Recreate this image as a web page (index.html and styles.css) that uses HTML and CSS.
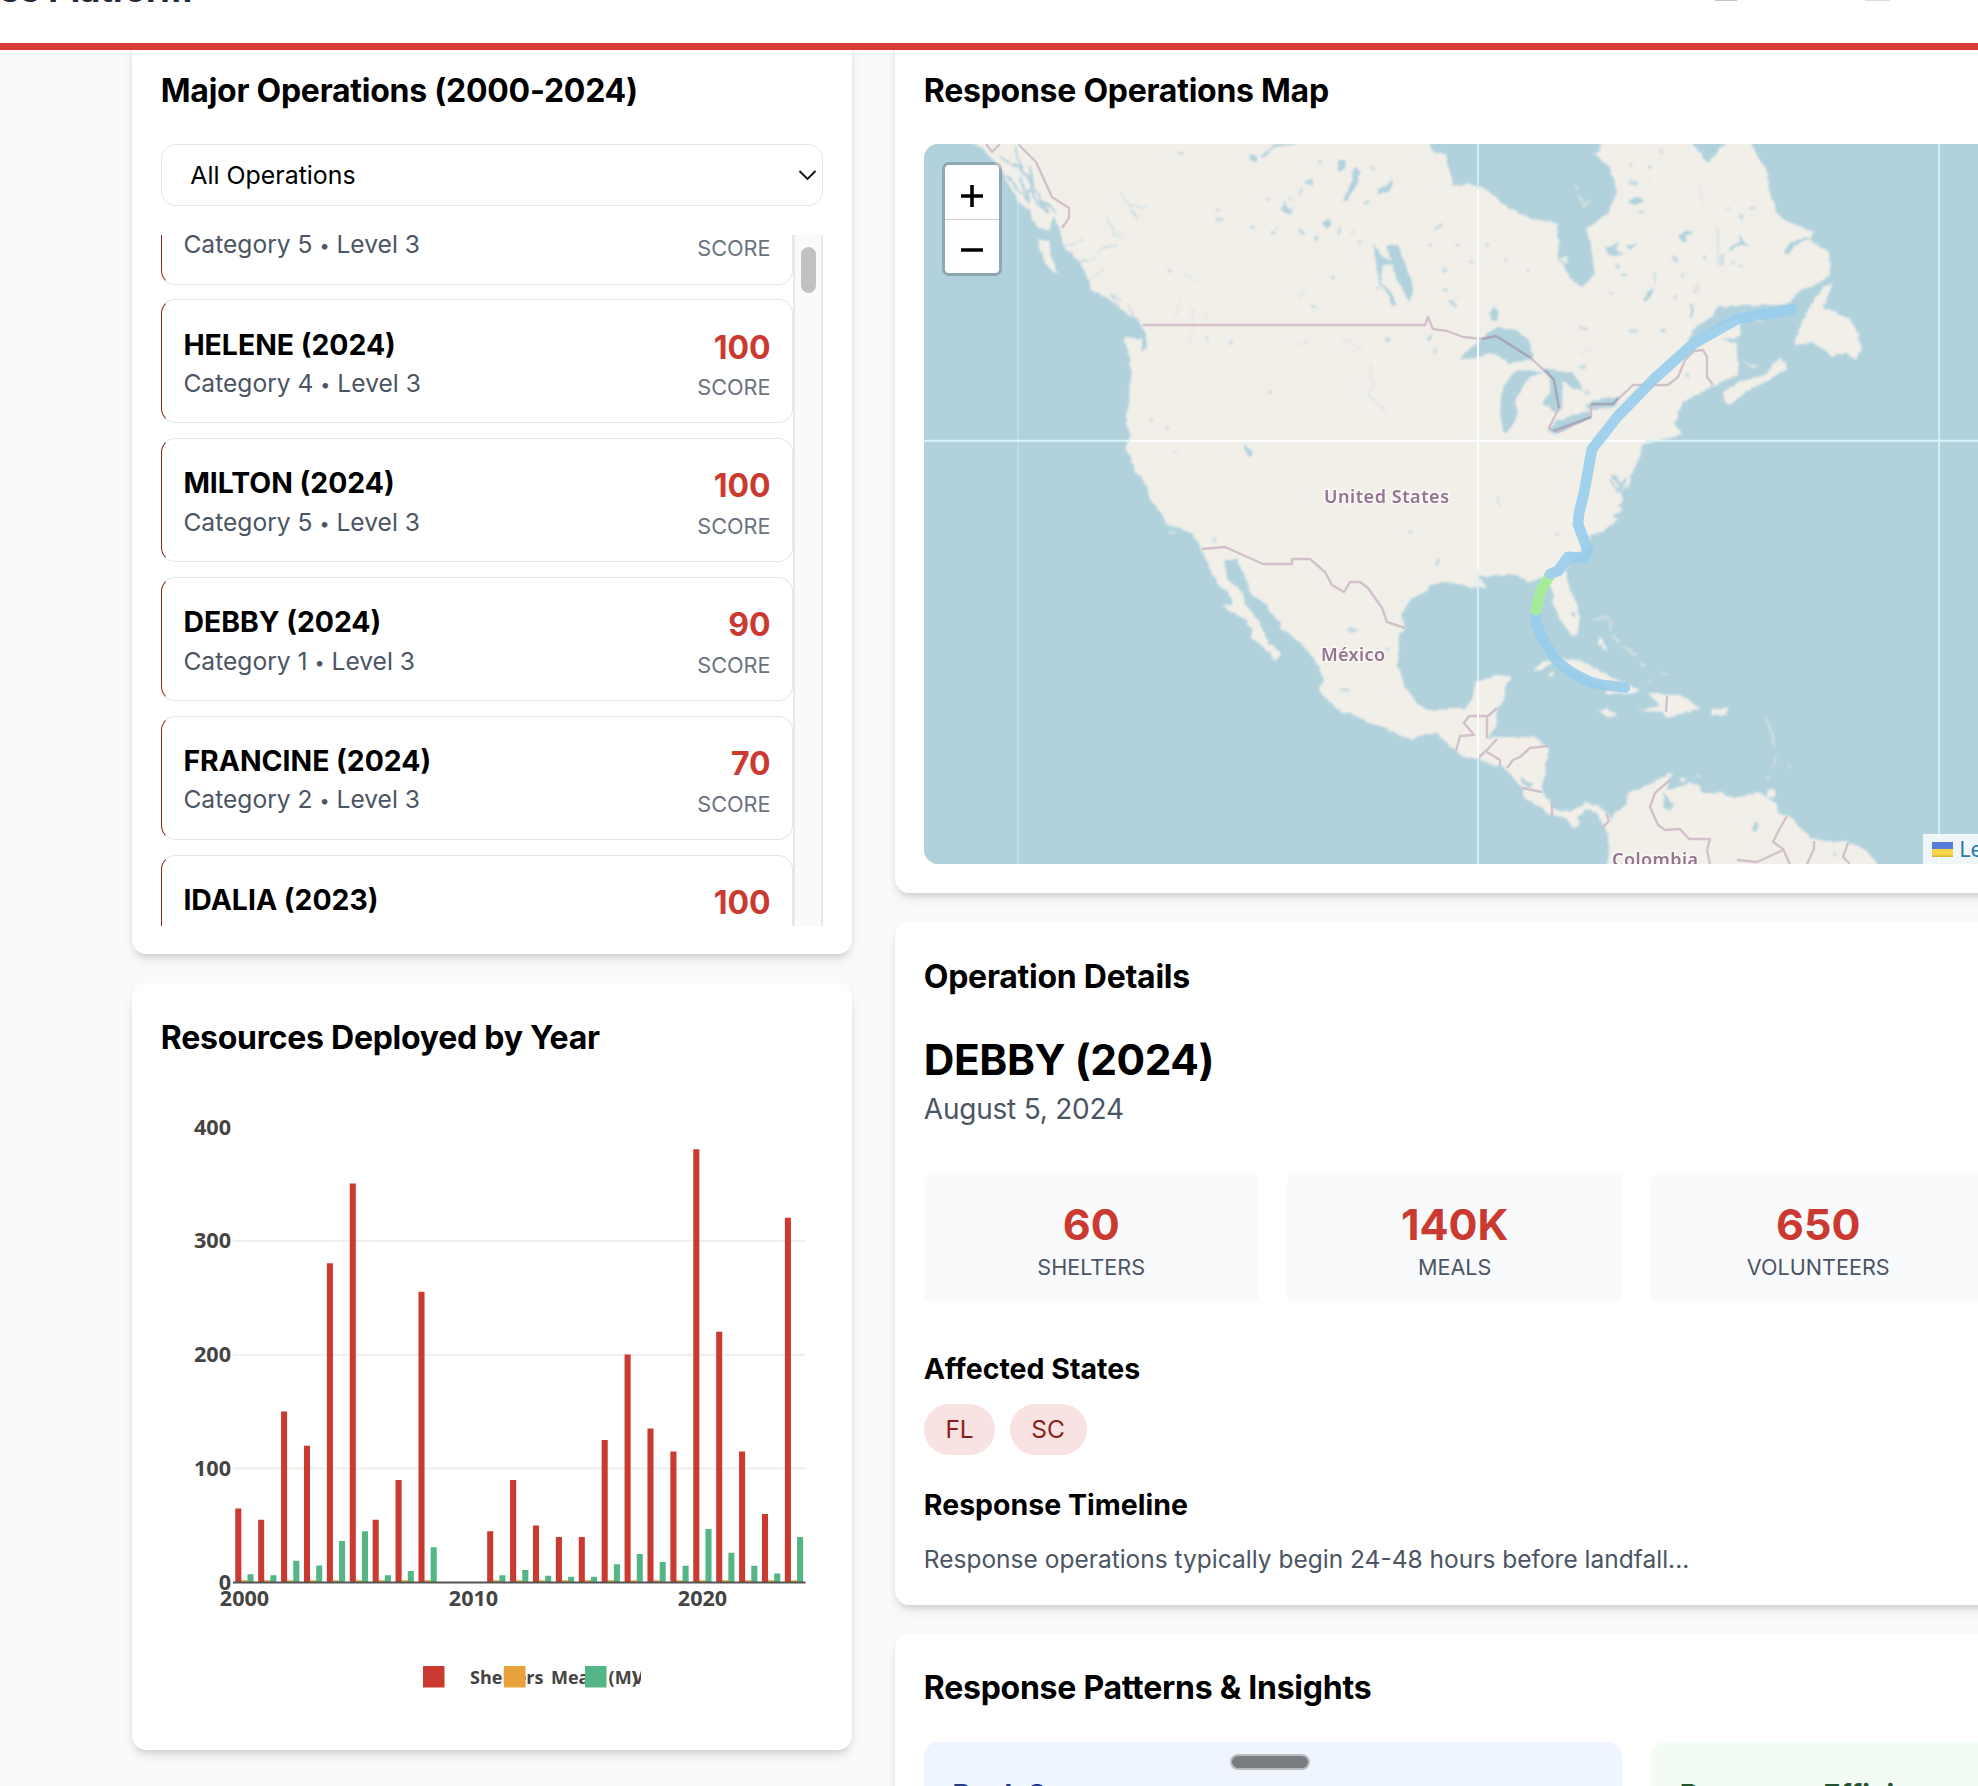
FILE: index.html
```html
<!DOCTYPE html>
<html lang="en">
<head>
<meta charset="utf-8">
<title>Disaster Response Platform</title>
<link rel="stylesheet" href="styles.css">
</head>
<body>
<header class="topbar">
  <div class="brand">Response Platform</div>
  <div class="toolbar"><i class="emblem"></i><i class="menu-line"></i></div>
</header>
<main class="layout">
  <div class="column side">
    <section class="card">
      <h2 class="title">Major Operations (2000-2024)</h2>
      <div class="select"><span>All Operations</span>
        <svg width="19" height="12" viewBox="0 0 19 12"><path d="M1.500 2 9.500 10l8-8" fill="none" stroke="#111" stroke-width="1.900"/></svg>
      </div>
      <div class="scroller">
        <div class="ops">
          <article class="op"><div><h3>BERYL (2024)</h3><p>Category 5 <i>•</i> Level 3</p></div><div class="score"><b>100</b><span>SCORE</span></div></article>
          <article class="op"><div><h3>HELENE (2024)</h3><p>Category 4 <i>•</i> Level 3</p></div><div class="score"><b>100</b><span>SCORE</span></div></article>
          <article class="op"><div><h3>MILTON (2024)</h3><p>Category 5 <i>•</i> Level 3</p></div><div class="score"><b>100</b><span>SCORE</span></div></article>
          <article class="op"><div><h3>DEBBY (2024)</h3><p>Category 1 <i>•</i> Level 3</p></div><div class="score"><b>90</b><span>SCORE</span></div></article>
          <article class="op"><div><h3>FRANCINE (2024)</h3><p>Category 2 <i>•</i> Level 3</p></div><div class="score"><b>70</b><span>SCORE</span></div></article>
          <article class="op"><div><h3>IDALIA (2023)</h3><p>Category 4 <i>•</i> Level 3</p></div><div class="score"><b>100</b><span>SCORE</span></div></article>
        </div>
        <div class="track"><div class="thumb"></div></div>
      </div>
    </section>
    <section class="card">
      <h2 class="title">Resources Deployed by Year</h2>
      <svg class="chart" viewBox="161 1091 662 630">
        <g stroke="#eee" stroke-width="2"><path d="M233 1468.500H805.500M233 1354.700H805.500M233 1240.700H805.500"/></g>
        <g fill="none" stroke-width=".265">
          <path stroke="#e9a23b" stroke-width=".3" d="M0 0v2M1 0v2M2 0v2M3 0v2M4 0v2M5 0v2M6 0v2M7 0v2M8 0v2M11 0v2M12 0v2M13 0v2M14 0v2M15 0v2M16 0v2M17 0v2M18 0v2M19 0v2M20 0v2M21 0v2M22 0v2M23 0v2M24 0v2" transform="translate(244.300 1582.500) scale(22.900 -1.140)"/>
          <path stroke="#cb3a31" d="M0 0v65M1 0v55M2 0v150M3 0v120M4 0v280M5 0v350M6 0v55M7 0v90M8 0v255M11 0v45M12 0v90M13 0v50M14 0v40M15 0v40M16 0v125M17 0v200M18 0v135M19 0v115M20 0v380M21 0v220M22 0v115M23 0v60M24 0v320" transform="translate(238.300 1582.500) scale(22.900 -1.140)"/>
          <path stroke="#54b685" d="M0 0v7.300M1 0v6.400M2 0v19M3 0v15M4 0v36.500M5 0v45M6 0v6.400M7 0v10M8 0v31M11 0v6.400M12 0v11M13 0v6M14 0v5M15 0v5M16 0v16M17 0v25M18 0v18M19 0v14.600M20 0v47M21 0v26M22 0v14.600M23 0v8M24 0v40" transform="translate(250.500 1582.500) scale(22.900 -1.140)"/>
        </g>
        <path d="M233 1582.500H805.500" stroke="#555" stroke-width="2"/>
        <g class="ylabels"><text x="231" y="1134.500">400</text><text x="231" y="1248">300</text><text x="231" y="1362">200</text><text x="231" y="1476">100</text><text x="231" y="1590">0</text></g>
        <g class="xlabels"><text x="244.500" y="1605.500">2000</text><text x="473.500" y="1605.500">2010</text><text x="702.500" y="1605.500">2020</text></g>
        <clipPath id="legend-clip"><path d="M415 1655H641V1700H415z"/></clipPath>
        <g class="legend" clip-path="url(#legend-clip)">
          <path fill="#cb3a31" d="M423 1666h21.500v21.500h-21.500z"/><text x="470" y="1684">Shelters</text>
          <path fill="#e9a23b" d="M504 1666h21.500v21.500h-21.500z"/><text x="551" y="1684">Meals (M)</text>
          <path fill="#54b685" d="M585 1666h21.500v21.500h-21.500z"/><text x="632" y="1684">Volunteers</text>
        </g>
      </svg>
    </section>
  </div>
  <div class="column wide">
    <section class="card">
      <h2 class="title">Response Operations Map</h2>
      <div class="map">
        <svg class="tiles" viewBox="924 144 1425 720" preserveAspectRatio="xMinYMin slice">
          <defs><filter id="soft" x="0" y="0" width="1" height="1"><feGaussianBlur stdDeviation=".7"/></filter>
          <filter id="coast" x="0" y="0" width="1" height="1"><feTurbulence type="fractalNoise" baseFrequency=".13" numOctaves="2" seed="4"/><feDisplacementMap in="SourceGraphic" scale="4.500" xChannelSelector="R" yChannelSelector="G"/><feGaussianBlur stdDeviation=".8"/></filter></defs>
          <path fill="#b1d2dd" d="M900 120h1500v800H900z"/>
          <g filter="url(#coast)">
            <g fill="#f2efe9">
            <path d="M966 138 984 150 993 160 1003 172 1010 187 1019 202 1029 210 1038 228 1048 230 1054 216 1060 230 1064 247 1076 258 1086 273 1091 290 1107 298 1120 310 1138 320 1145 333 1147 347 1141 353 1141 340 1124 336 1130 357 1131 377 1129 400 1125 415 1130 435 1126 450 1131 458 1134 470 1145 483 1148 492 1152 502 1165 518 1166 525 1177 527 1190 533 1198 542 1202 552 1210 568 1217 583 1232 597 1232 606 1223 605 1230 613 1242 617 1252 628 1252 639 1270 652 1275 661 1280 655 1273 645 1267 643 1267 638 1260 623 1247 605 1242 593 1227 578 1224 560 1237 560 1242 568 1250 593 1267 605 1270 613 1282 622 1280 628 1293 637 1307 650 1318 665 1323 680 1319 690 1327 700 1342 712 1357 716 1370 724 1390 730 1400 736 1413 739 1428 733 1438 734 1450 745 1463 757 1478 758 1490 764 1502 766 1513 778 1523 788 1523 797 1543 808 1547 814 1560 817 1567 820 1575 828 1580 823 1577 817 1587 809 1597 813 1604 825 1608 835 1609 850 1607 870H1880L1873 857 1860 847 1845 841 1817 841 1802 830 1793 818 1778 813 1777 805 1760 793 1743 795 1735 798 1722 793 1702 793 1698 785 1688 783 1670 790 1667 788 1672 775 1667 774 1653 783 1640 788 1628 793 1626 805 1614 813 1613 820 1607 813 1597 805 1586 803 1570 812 1553 808 1542 792 1547 757 1548 747 1535 737 1513 737 1497 737 1488 738 1496 727 1497 710 1503 700 1505 687 1511 678 1507 676 1497 675 1475 682 1473 697 1465 708 1455 708 1433 712 1418 705 1403 683 1398 663 1399 635 1405 628 1402 613 1412 597 1427 592 1430 585 1447 582 1462 585 1470 588 1478 587 1487 588 1483 582 1477 577 1493 576 1500 575 1517 575 1528 583 1542 578 1552 588 1553 603 1562 622 1571 635 1577 635 1580 620 1579 612 1568 583 1566 570 1570 560 1587 547 1590 535 1602 532 1617 520 1612 516 1623 510 1617 506 1623 500 1617 480 1622 490 1634 470 1641 453 1641 445 1662 440 1682 435 1675 423 1682 403 1710 388 1739 375 1736 343 1722 339 1739 337 1741 325 1735 318 1710 330 1689 343 1692 330 1711 317 1718 307 1766 305 1787 305 1801 290 1818 284 1830 275 1829 253 1815 245 1811 238 1814 233 1780 218 1771 197 1767 173 1748 138H1730L1708 163 1701 153 1687 138H1604L1596 155 1610 167 1617 193 1605 217 1586 228 1591 247 1595 273 1582 288 1570 277 1559 260 1558 223 1531 219 1505 206 1489 191 1468 183 1453 187 1446 154 1432 153 1429 138z"/>
            <path d="M1037 239 1051 242 1050 253 1059 276 1048 267 1040 252zM1825 285 1833 284 1823 307 1851 320 1857 332 1862 348 1855 360 1846 352 1832 357 1823 348 1814 343 1793 345 1800 327 1811 303zM1722 393 1741 380 1766 375 1771 367 1781 356 1787 368 1773 378 1745 392 1729 406zM1533 672 1542 662 1560 658 1582 661 1613 678 1640 690 1630 694 1605 693 1608 687 1587 677 1557 663zM1648 693 1667 695 1680 695 1700 708 1687 712 1668 718 1662 712 1638 710 1660 706zM1711 709h17l-2 6h-15zM1598 710l10-1 11 6-12 2zM1599 636l8 12-2 3-6-7zM1768 790l7 0 0 7-9 1zM1681 778h4v4h-4zM1549 672h5v4h-5z"/>
            <path d="M1739 310 1752 315 1767 322 1755 320zM1741 357l7 7 12 3-10 1zM1621 480l7 8 3-9-4-4zM1559 259l8-4 1 9z"/>
            </g>
            <g fill="none" stroke="#e0e4e2" stroke-width="1.500"><path d="M1593 619l14-2 4 6-1 7M1612 636l8 5M1622 647l15 8M1640 663l5 3M1660 672l9 3M1646 681l5-1M1766 719l5 13 4 16M1776 757l-3 11M1770 776l-3 3M1788 766l3 1M1695 775l7 1M1580 195l4 12 4-7M1582 207l3-4M1168 533l8-1M1575 185l2 5"/></g>
            <g fill="#b1d2dd">
            <path d="M1458 360 1472 347 1496 327 1517 330 1530 342 1534 360 1509 363 1495 353 1479 357zM1500 413 1502 432 1508 433 1517 417 1516 397 1530 377 1545 372 1515 371 1507 380 1501 395zM1542 368 1573 372 1583 392 1572 388 1563 382 1562 410 1556 413 1542 403 1549 393 1549 378zM1547 430 1558 420 1591 410 1591 417 1570 427 1556 435zM1584 408 1594 400 1620 397 1615 407 1594 409zM1386 245 1398 245 1414 287 1410 303 1406 297 1396 277zM1374 243l6 12 14 8-12 4-1 16 11 10 5 12-5 1-6-14-7-8-3-20zM1663 792l6 8 4 6-3 3-6-1zM1665 803l8 5-5 2zM1354 167l6 5-4 14-9 15-4 0 7-14zM1338 160l8 0-1 9-7 3zM1303 183l11-5-2 7zM1249 154l8 2 0 6-6-1zM1321 223l8-3 3 4-4 4zM1284 200l6 11 4-6-3 10-8-4zM1378 190l14-9-2-5 4 5-4 9-12 5zM1243 444l9 6 1 6-5-1zM1489 313l5-7 5 5-2 9-5 0zM1643 301l4-9 8-4-4 8-7 7zM1627 202l10-6 6 4-8 6zM1605 248l15-6-5 8 9 4-10 2-9-4zM1625 245l12 0-7 5zM1678 237l8-7 9 3-10 2 2 8zM1729 248l10-6 0-8 7 10 4 2-14 0-6 6zM1784 253l6-11 24-6-20 11-8 8zM1755 821l4 2-3 9-4-1zM1570 612l5 0 0 5-4 1zM1521 776l12 8-3 5-9-7z"/>
            </g>
            <g fill="none" stroke="#b1d2dd" stroke-width="2.500">
              <path d="M1091 293 1107 299 1122 312 1138 326 1146 345M1261 158l14-12 22-4M1610 480l8 12 8-14M1612 475l10 9M1000 158l20 10 10 10 4 20 14 15M1015 146l7 25 11 9M1030 167l3 17-8 14M1020 178l10 25M1035 190l12 21M1040 200l16 12M1007 176l22 26M1692 303l-1 14M1750 355l10-9M1738 364l12 6"/>
              <path stroke-width="1.300" stroke-opacity=".75" d="M1655 272v12M1696 284q-5 5 0 9 5-5 0-9M1121 192 1131 209 1139 222M1132 206 1148 207M1106 216 1114 234M1097 253q9-10 20-7M1718 228v38M1497 495l3 14M1114 234l10 4M1718 320l-18 8M1064 247l20-8M1076 262l22-4M1091 280l14-12M1120 308l-10-14 12 8M1134 318l-6-14"/>
              <path stroke-width="1.200" stroke-opacity=".4" d="M1182 295l-6 20M1191 304l3 22-5 18M1205 310l3 12M1370 363l2 24-4 8 20 17M1295 346l16-4M1340 343l10-3 6 8 7 0M1183 271l14 12M1648 176v9M1110 228l15 7M1700 183l2 20M1460 295l-8 8M1580 355l14-8M1307 290l-8 8"/>
            </g>
            <g class="ponds"><path d="M1181 153h1M1217 219h7M1218 210h1M1168 271h3M1300 193l2-3M1320 162h1M1372 168h1M1272 233h1M1276 228h1M1300 231l4 2M1316 237v3M1340 228l-1 5M1352 232h1M1360 243h1M1365 204l3-3M1268 199h1M1282 208h1M1290 198h1M1251 227l2 1M1377 288h1M1332 278h1M1313 307h2M1207 337v2M1231 341v2M1386 340h3M1428 339l3-2M1435 350v2M1269 392h1M1151 421h1M1167 428h1M1174 453h1M1430 245h1M1436 228l5-3M1442 270h5M1457 245h1M1443 290h3M1450 301l6 5M1470 262h1M1487 245h1M1505 260h1M1527 271h1M1581 327l5 2M1630 331h6M1662 330l2 2M1610 294h2M1617 265l2 3M1622 275h3M1675 296v2M1682 275h1M1673 257l3 4M1704 257h1M1722 255v8M1733 263h1M1740 266h1M1742 215v2M1727 208h1M1752 208h1M1630 165h1M1631 183h6M1650 167h1M1660 150l2 3M1640 212h2M1581 367h4M1586 392h2M1687 374v2M1350 630h6M1342 690h5M1213 539l2 2M1409 533h1M1436 565l3-6M1388 649h1M1556 534h1M1835 853v1M1618 410h2"/></g>
          </g>
          <g filter="url(#soft)">
            <g fill="none" stroke="#cdb9c6" stroke-width="2.400" stroke-linejoin="round" opacity=".85">
              <path d="M1143 325H1425L1428 317 1433 329 1447 331 1463 337 1482 339 1496 336 1531 358 1554 380 1559 408 1549 428 1558 432 1591 417 1591 405 1613 404 1633 385 1668 385 1678 377 1685 360 1694 351 1703 350 1707 357 1707 377 1713 385M986 144l6 8 8-8M1018 144 1036 162 1052 197 1069 208 1069 218 1062 228M1202 549 1225 547 1263 564 1292 564 1292 559 1310 559 1325 572 1332 585 1344 592 1350 582 1360 582 1368 588 1382 608 1387 622 1405 628M1456 751 1460 736 1474 735 1464 723 1469 716 1488 716 1497 708M1487 716V738M1478 758 1487 750 1497 739M1487 752l13 8v6M1507 768 1513 760 1520 757 1530 748 1548 746M1522 788l20 4M1552 803v13M1606 813l3 8-6 6M1667 696l-1 16M1670 780 1655 793 1650 807 1658 825 1665 830 1680 829 1689 839 1710 839 1707 850 1710 864M1787 816 1780 828 1773 842 1783 849 1790 864M1783 850 1757 862 1737 860M1814 841l0 8-7 15M1848 843l-5 14 7 7"/>
              <path stroke="#8d96b0" opacity=".7" d="M1482 339 1496 336 1531 358M1545 370 1554 380 1559 408M1553 431 1591 417M1591 404 1613 404 1618 398"/>
            </g>
            <g class="places"><text x="1324" y="502.500" textLength="125">United States</text><text x="1321" y="660.500" textLength="64">México</text><text x="1612" y="865.500" textLength="86">Colombia</text></g>
          </g>
          <g stroke="#d9f6fb" fill="none"><path stroke-width="1" opacity=".6" d="M1018 144V864"/><path stroke-width="1.500" d="M1478 144V864M1939 144V864"/><path stroke-width="2" d="M924 440.800H2349"/></g>
          <path stroke="#fff" fill="none" stroke-width="1.700" d="M1130 440.800H1645M1478 190V570M1478 682V758"/>
          <g fill="none" stroke-width="10.800" stroke-linecap="round" stroke-linejoin="round" opacity=".9">
            <path stroke="#98cdec" d="M1536 611V623L1542 638 1555 659Q1566 670 1580 677 1590 683 1603 685L1625 687.500"/>
            <path stroke="#a3ef92" d="M1550 575 1540 592 1536 610"/>
            <path stroke="#98cdec" d="M1792 309.500 1738 318.500 1693 344 1654 379 1618 416 1592 449 1584 493 1579 513 1578 524 1588 551 1584 558 1568 557 1558 571 1550 574"/>
          </g>
        </svg>
        <div class="zoomer">
          <button aria-label="Zoom in"><svg width="22" height="22" viewBox="0 0 22 22"><path d="M0 11h22M11 0v22"/></svg></button>
          <button aria-label="Zoom out"><svg width="22" height="22" viewBox="0 0 22 22"><path d="M0 11h22"/></svg></button>
        </div>
        <div class="credit"><svg width="21" height="15" viewBox="0 0 21 15"><path fill="#557bdb" d="M0 0h21v7.500H0z"/><path fill="#f8d648" d="M0 7h21v8H0z"/><path fill="#d3b43c" d="M0 13.500h21V15H0z"/></svg><a>Leaflet</a><span>| © OpenStreetMap contributors</span></div>
      </div>
    </section>
    <section class="card">
      <h2 class="title">Operation Details</h2>
      <h3 class="storm">DEBBY (2024)</h3>
      <p class="date">August 5, 2024</p>
      <div class="stats">
        <div class="stat"><b>60</b><span>SHELTERS</span></div>
        <div class="stat"><b>140K</b><span>MEALS</span></div>
        <div class="stat"><b>650</b><span>VOLUNTEERS</span></div>
        <div class="stat"><b>3</b><span>LEVEL</span></div>
      </div>
      <h4 class="sub">Affected States</h4>
      <div class="pills"><span>FL</span><span>SC</span></div>
      <h4 class="sub">Response Timeline</h4>
      <p class="note">Response operations typically begin 24-48 hours before landfall...</p>
    </section>
    <section class="card">
      <h2 class="title">Response Patterns &amp; Insights</h2>
      <div class="insights">
        <div class="insight blue">Peak Season</div>
        <div class="insight green">Response Efficiency</div>
      </div>
    </section>
  </div>
</main>
<div class="handle"></div>
</body>
</html>
```
FILE: styles.css
```css
* { box-sizing: border-box; }
html, body { margin: 0; height: 1786px; overflow: hidden; }
body { background: #f9fafc; color: #000; font-family: Inter, "Liberation Sans", sans-serif; position: relative; }
h2, h3, h4, p { margin: 0; }

.topbar { position: relative; z-index: 2; height: 50px; background: #fff; border-bottom: 7px solid #d93a37; overflow: hidden; display: flex; }
.brand { width: 192px; height: 50px; margin-top: -36px; display: flex; justify-content: flex-end; white-space: nowrap; font-size: 35px; line-height: 50px; font-weight: 700; letter-spacing: -.005em; color: #1f2937; }
.toolbar { display: flex; gap: 128px; margin-left: 1523px; }
.emblem { width: 22px; height: 1px; background: #c4c4bb; }
.menu-line { width: 25px; height: 1px; background: #ddd; }

.layout { display: flex; align-items: flex-start; gap: 43px; height: 1749.600px; overflow: hidden; margin-top: -13.600px; padding-left: 132px; }
.column { display: flex; flex-direction: column; gap: 28.800px; flex: none; }
.side { width: 720px; }
.wide { width: 1483px; }
.card { background: #fff; border-radius: 14.400px; padding: 28.800px; box-shadow: 0 7px 11px -2px rgba(0,0,0,.12), 0 3px 7px -3px rgba(0,0,0,.12); }
.title { font-size: 32px; line-height: 51.400px; font-weight: 700; letter-spacing: -.008em; margin-bottom: 27.800px; white-space: nowrap; }

.select { height: 61.200px; border: 1.500px solid #e5e7eb; border-radius: 14.400px; display: flex; align-items: center; justify-content: space-between; padding: 0 5px 0 28.500px; font-size: 24.900px; margin-bottom: 29.500px; }
.scroller { height: 690.500px; overflow: hidden; display: flex; }
.ops { flex: 1; display: flex; flex-direction: column; gap: 14.400px; margin-top: -75px; }
.op { flex: none; height: 124.500px; border: 1.500px solid #e5e7eb; border-left: 1.500px solid #8a2622; border-radius: 14.400px; padding: 21.600px; display: flex; justify-content: space-between; }
.op h3 { font-size: 28.400px; line-height: 45.200px; margin-bottom: -2px; font-weight: 700; }
.op p { font-size: 24.600px; line-height: 36px; color: #4b5563; }
.op i { font-style: normal; font-size: 18px; vertical-align: 1px; }
.score { text-align: right; display: flex; flex-direction: column; }
.score b { font-size: 32px; line-height: 52.400px; margin-bottom: -1px; font-weight: 700; color: #cb3a31; }
.score span { font-size: 21.700px; line-height: 28.800px; color: #6b7280; }
.track { width: 30px; background: #fafafa; border: solid #e8e8e8; border-width: 0 2px; padding: 12px 5px 12px 6px; }
.thumb { height: 46px; border-radius: 8px; background: #c1c1c1; }

.chart { display: block; width: 662px; height: 630px; }
.chart text { font-family: "Open Sans", "Noto Sans", sans-serif; font-weight: 700; fill: #444; font-size: 21.600px; }
.chart .ylabels text { text-anchor: end; }
.chart .xlabels text { text-anchor: middle; }
.chart .legend text { font-size: 18px; }

.map { position: relative; height: 720px; border-radius: 14.400px; overflow: hidden; background: #b1d2dd; }
.tiles { display: block; width: 1425px; height: 720px; }
.ponds { fill: none; stroke: #b1d2dd; stroke-width: 3.200px; stroke-linecap: round; opacity: .75; }
.places text { font-family: "Noto Sans", sans-serif; font-weight: 600; font-size: 18px; fill: #93748f; stroke: #fff; stroke-width: 3px; stroke-opacity: .6; paint-order: stroke; }
.zoomer { position: absolute; left: 18px; top: 18px; width: 60px; height: 118px; border: 3px solid rgba(0,0,0,.2); border-radius: 7px; background: #fff; background-clip: padding-box; display: flex; flex-direction: column; }
.zoomer { height: 114px; }
.zoomer button { flex: 1; border: 0; padding: 7px 0 0; background: none; display: flex; align-items: center; justify-content: center; }
.zoomer button path { stroke: #000; stroke-width: 3.600px; fill: none; }
.zoomer button + button { border-top: 1px solid #ccc; padding-top: 6px; }
.credit { position: absolute; right: 0; bottom: 0; width: 426px; height: 30px; padding-left: 9px; background: rgba(255,255,255,.8); display: flex; align-items: center; gap: 6px; font: 21.600px/30px "Noto Sans", sans-serif; color: #333; white-space: nowrap; overflow: hidden; }
.credit svg { flex: none; }
.credit a { color: #2a78a5; }

.storm { font-size: 42.400px; line-height: 59.200px; margin-bottom: -1.600px; font-weight: 700; letter-spacing: -.010em; }
.date { font-size: 28px; line-height: 43.200px; letter-spacing: -.008em; color: #4b5563; margin-bottom: 42px; }
.stats { display: grid; grid-template-columns: repeat(4, 1fr); gap: 28.800px; margin-bottom: 43.200px; }
.stat { height: 130.600px; padding: 21.600px 0; background: #f9fafc; border-radius: 7.200px; text-align: center; display: flex; flex-direction: column; }
.stat b { font-size: 43px; line-height: 60px; margin-bottom: -1px; color: #cb3a31; }
.stat span { font-size: 21.600px; line-height: 28.800px; color: #4b5563; }
.sub { font-size: 28.500px; line-height: 43.200px; font-weight: 700; margin-bottom: 14.400px; }
.pills { display: flex; gap: 14.400px; margin-bottom: 28.800px; }
.pills span { padding: 7.200px 21.600px; border-radius: 26px; background: #f8e2e2; color: #8a1f1b; font-size: 24.500px; line-height: 36px; }
.note { font-size: 24.500px; line-height: 36px; margin-bottom: -1px; color: #4b5563; }
.insights { display: grid; grid-template-columns: 1fr 1fr; gap: 28.800px; }
.insight { height: 200px; border-radius: 14.400px; padding: 31px 28.800px; font-size: 28.400px; line-height: 43.200px; font-weight: 700; }
.blue { background: #eff5fe; color: #253a85; }
.green { background: #f2fcf5; color: #25532f; }
.handle { position: absolute; z-index: 3; left: 1230px; top: 1754px; width: 80px; height: 16px; border-radius: 8px; border: 2px solid #bbbdbf; background: #797c80; }
```
